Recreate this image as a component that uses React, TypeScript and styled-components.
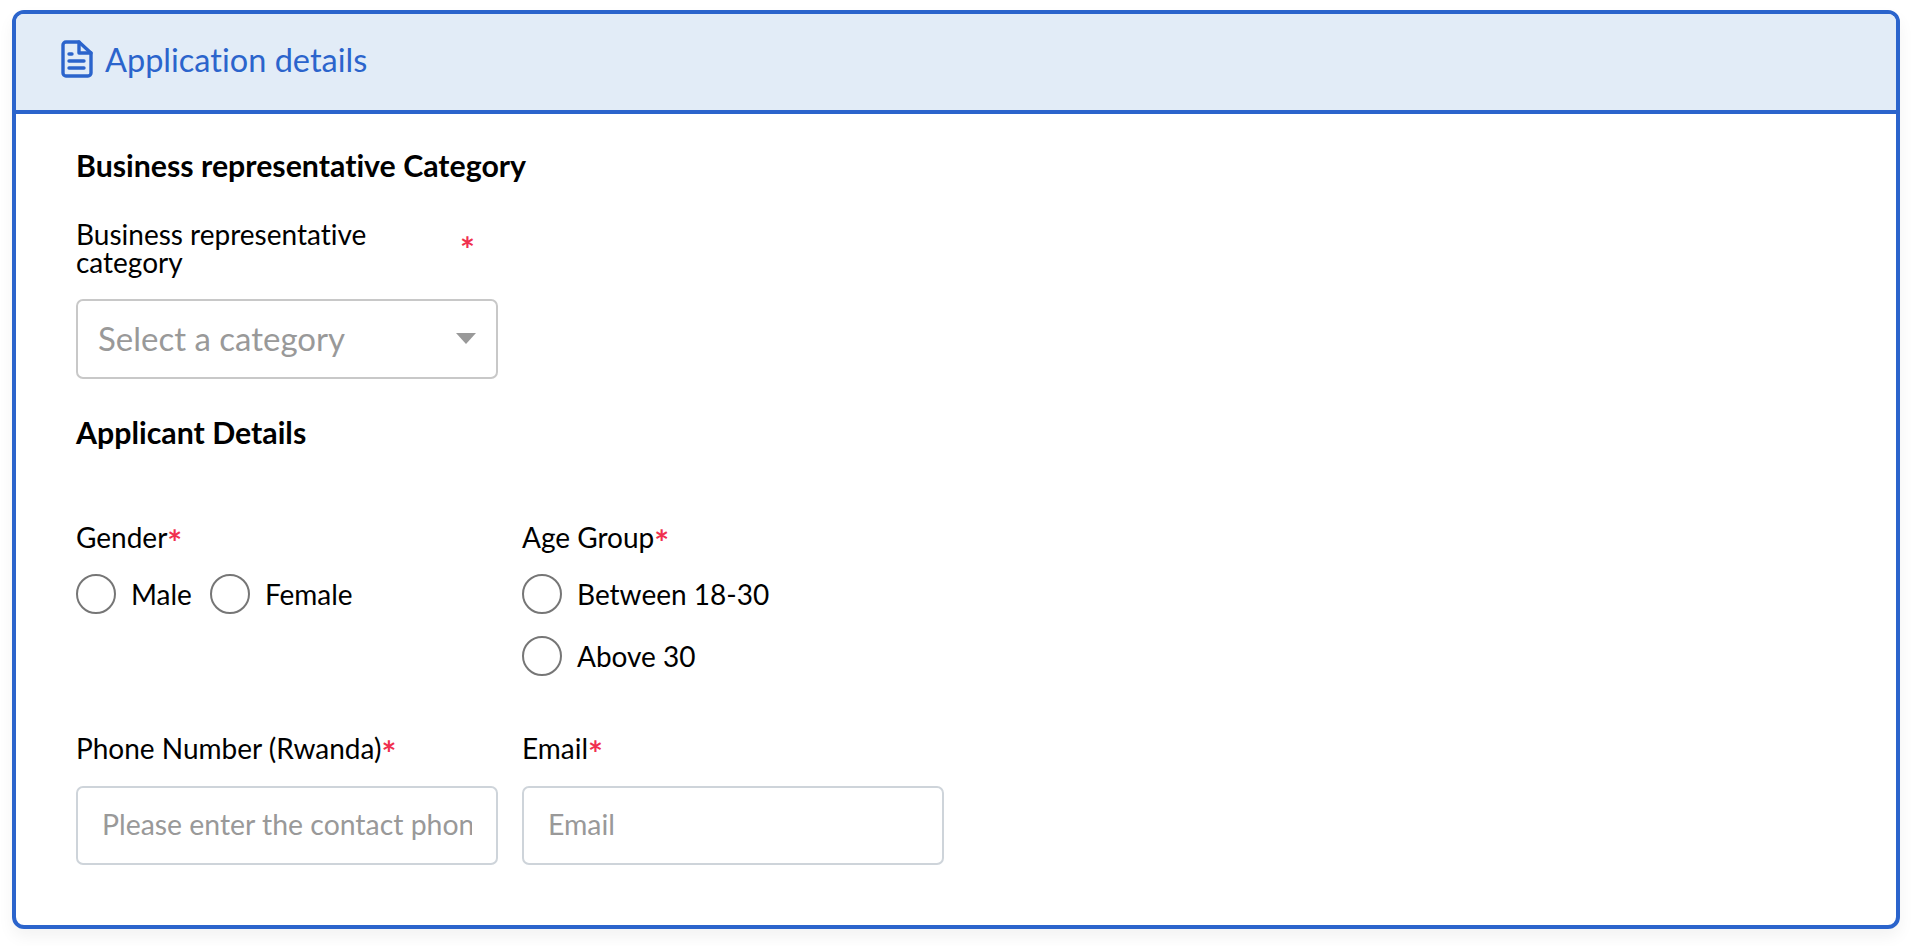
import React from 'react';
import styled, { createGlobalStyle } from 'styled-components';

const GlobalStyle = createGlobalStyle`
  * { box-sizing: border-box; }
  html, body { margin: 0; padding: 0; background: #ffffff; }
  body {
    font-family: "Lato", "Noto Sans", sans-serif;
    font-variant-ligatures: none;
    color: #000000;
  }
`;

const Page = styled.div`
  width: 1916px;
  height: 946px;
  padding: 10px 16px 0 12px;
  overflow: hidden;
`;

const Card = styled.section`
  height: 919px;
  border: 4px solid #2b64cc;
  border-radius: 12px;
  background: #ffffff;
  overflow: hidden;
  box-shadow: 0 8px 16px rgba(0, 0, 0, 0.05);
`;

const CardHeader = styled.header`
  height: 100px;
  display: flex;
  align-items: center;
  gap: 12px;
  padding: 0 0 6px 45px;
  background: #e2ecf7;
  border-bottom: 4px solid #2b64cc;
  color: #2b64cc;
`;

const HeaderTitle = styled.h2`
  margin: 0;
  font-size: 32.5px;
  font-weight: 400;
`;

const CardBody = styled.div`
  padding: 33px 0 0 60px;
`;

const SectionTitle = styled.h3`
  margin: 0;
  font-size: 30.3px;
  line-height: 36px;
  font-weight: 700;
`;

const LongLabel = styled.label`
  width: 420px;
  display: grid;
  grid-template-columns: 384px 1fr;
  align-items: center;
  margin-top: 37px;
  font-size: 28px;
  line-height: 28px;
`;

const SelectBox = styled.div`
  width: 422px;
  height: 80px;
  margin: 23px 0 35px;
  padding: 0 20px 2px;
  display: flex;
  align-items: center;
  justify-content: space-between;
  border: 2px solid #c8c8c8;
  border-radius: 7px;
  font-size: 33px;
  color: #999999;
`;

const Caret = styled.span`
  width: 0;
  height: 0;
  border-left: 10px solid transparent;
  border-right: 10px solid transparent;
  border-top: 11px solid #999999;
`;

const FieldRow = styled.div<{ $top: number }>`
  display: grid;
  grid-template-columns: 422px 422px;
  column-gap: 24px;
  margin-top: ${(p) => p.$top}px;
`;

const FieldLabel = styled.label`
  display: block;
  font-size: 28px;
  line-height: 32px;
`;

const Required = styled.span`
  font-size: 35px;
  font-weight: 700;
  line-height: 0;
  vertical-align: -7px;
  color: #f0304f;
`;

const RadioGroup = styled.div<{ $stacked?: boolean }>`
  display: flex;
  flex-direction: ${(p) => (p.$stacked ? 'column' : 'row')};
  gap: ${(p) => (p.$stacked ? '22px' : '18px')};
  margin-top: 21px;
`;

const RadioOption = styled.div`
  display: flex;
  align-items: center;
  gap: 15px;
  font-size: 28px;
  line-height: 40px;
`;

const RadioCircle = styled.span`
  width: 40px;
  height: 40px;
  border: 2px solid #767676;
  border-radius: 50%;
  background: #ffffff;
`;

const TextInput = styled.input`
  display: block;
  width: 100%;
  height: 79px;
  margin-top: 22px;
  padding: 0 24px 3px;
  border: 2px solid #ced4da;
  border-radius: 7px;
  font-family: inherit;
  font-size: 28.4px;
  font-variant-ligatures: none;
  color: #000000;
  &::placeholder {
    color: #999999;
    opacity: 1;
  }
`;

const DocumentIcon = () => (
  <svg width="32" height="38" viewBox="0 0 32 38" fill="none" stroke="currentColor" strokeWidth="3.4" strokeLinejoin="round" strokeLinecap="round">
    <path d="M5 2h13l12 11v20a3 3 0 0 1-3 3H5a3 3 0 0 1-3-3V5a3 3 0 0 1 3-3z" />
    <path d="M18 2v11h12" />
    <path d="M8 14h3M8 21h15M8 28h15" />
  </svg>
);

const App = () => (
  <Page>
    <GlobalStyle />
    <Card>
      <CardHeader>
        <DocumentIcon />
        <HeaderTitle>Application details</HeaderTitle>
      </CardHeader>
      <CardBody>
        <SectionTitle>Business representative Category</SectionTitle>
        <LongLabel>
          <span>Business representative category</span>
          <Required>*</Required>
        </LongLabel>
        <SelectBox>
          Select a category
          <Caret />
        </SelectBox>
        <SectionTitle>Applicant Details</SectionTitle>
        <FieldRow $top={71}>
          <div>
            <FieldLabel>Gender<Required>*</Required></FieldLabel>
            <RadioGroup>
              <RadioOption><RadioCircle />Male</RadioOption>
              <RadioOption><RadioCircle />Female</RadioOption>
            </RadioGroup>
          </div>
          <div>
            <FieldLabel>Age Group<Required>*</Required></FieldLabel>
            <RadioGroup $stacked>
              <RadioOption><RadioCircle />Between 18-30</RadioOption>
              <RadioOption><RadioCircle />Above 30</RadioOption>
            </RadioGroup>
          </div>
        </FieldRow>
        <FieldRow $top={56}>
          <div>
            <FieldLabel>Phone Number (Rwanda)<Required>*</Required></FieldLabel>
            <TextInput placeholder="Please enter the contact phone number" />
          </div>
          <div>
            <FieldLabel>Email<Required>*</Required></FieldLabel>
            <TextInput placeholder="Email" />
          </div>
        </FieldRow>
      </CardBody>
    </Card>
  </Page>
);

export default App;
